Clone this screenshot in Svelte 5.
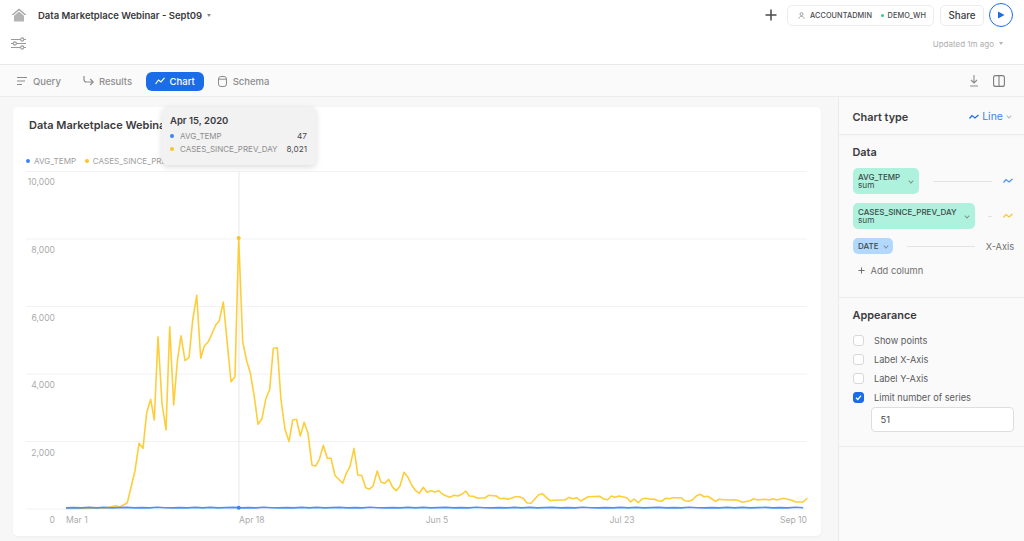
<script>
  const yellow = [[66,508.5],[81,508.4],[96,508.3],[108,507.6],[115.7,505.7],[120,507],[127.3,502.7],[135,470.7],[139,443.3],[143,448.3],[146.7,412.7],[150.7,399.3],[154.3,420],[158,336.7],[162,403.3],[166,430],[169.7,326.7],[173.7,405],[177.3,361.7],[181,335.7],[185,360.7],[189,357.7],[192.7,320],[196.7,295.3],[200.7,358.3],[204.3,346],[208.3,341.7],[211.7,334.3],[215.7,325],[219.3,320.7],[223.3,302],[227.3,343.3],[231,381.7],[235,376.7],[238.7,238],[242.7,341.7],[246.7,361],[250.3,372.7],[254.3,396.7],[258,424.3],[262,418.7],[265.7,399.3],[269.7,389.3],[273.3,348.3],[277.3,347.7],[281,400],[285,429.3],[289,441.5],[292.7,420],[296.5,419.3],[300.3,436],[304.2,422.3],[308,433.3],[312,465.2],[315.6,466],[319.3,459.6],[323.3,445.2],[327.3,458.3],[331,458.3],[335,475.5],[342.7,483.3],[346.3,473.3],[350,466.3],[354,448.3],[357.8,475],[361.7,475.5],[365.7,487.7],[369.3,489.2],[373,486.2],[377.2,471],[381,482.3],[385,483.3],[388.7,479.3],[392.7,487.3],[396.3,490.7],[400,486],[404,472.3],[408,477.3],[411.7,485],[415.7,490.7],[419.3,493.3],[423.3,487.3],[427,492.3],[431,490.7],[434.7,492],[438.7,490.7],[442.3,494],[446.3,496],[450,497.3],[454,495.3],[458,496],[461.7,494.3],[465.7,491],[469.3,496],[473.3,496.3],[477,498],[484.7,498],[488.7,495.3],[496.3,496],[500,498.7],[504,498.3],[508,499.3],[515.3,496.7],[519.3,496.7],[523.3,498.3],[527,503],[531,503.3],[538.7,494.7],[542.3,493.7],[550,500.7],[554,500.3],[560,500],[565,500],[569,497.3],[572.7,498.7],[576.7,497.7],[580.7,501],[588.3,496.7],[600,496.3],[603.7,499],[607.7,499.7],[611.3,496],[615,497.3],[619,496],[626.7,497.7],[630.7,502],[634,499],[638.3,502.7],[642.3,498.7],[646,498.3],[650,499.3],[654,499],[657.7,500.7],[661.7,501.3],[665.3,498.3],[669.3,498.7],[673.3,497.7],[680.7,497.7],[684.7,500.7],[688.7,501.3],[692.3,500],[696.3,496],[700,494.3],[704,496.7],[707.7,496.3],[711.7,498.7],[715.3,501.3],[719.3,499.3],[726.7,500],[735,499.7],[738.5,500.5],[742.3,502.3],[750,500.7],[753.7,498.7],[757.7,500],[765.3,499.3],[769,500],[773,498.7],[776.7,500],[783.3,498.3],[791,500],[796,502],[803.3,502],[807.3,498]];
  const blueOffsets = [0.4,0,0.5,-0.3,0.3,-0.4,0.4,0,-0.2,0.5,0,0.3,-0.5,0.2];
  const blue = [];
  for (let i = 0, x = 66; x <= 807; x += 7.6, i++) {
    blue.push([Math.round(x * 10) / 10, 507.6 + blueOffsets[i % blueOffsets.length] * 0.7]);
  }
  const toPts = (a) => a.map((p) => p.join(',')).join(' ');
  const grid = [171.5, 239, 306.5, 374, 441.5, 509];
  const yLabels = [['10,000', 185], ['8,000', 252.5], ['6,000', 320.5], ['4,000', 388], ['2,000', 455.5], ['0', 522.5]];
  const xLabels = [['Mar 1', 66, 'start'], ['Apr 18', 239, 'start'], ['Jun 5', 437, 'middle'], ['Jul 23', 622, 'middle'], ['Sep 10', 807, 'end']];
</script>

<div class="page">
  <header class="top">
    <div class="row one">
      <svg class="home" viewBox="0 0 16 14" width="16" height="14"><path d="M8 .5 15.5 7H13.6L8 2.3 2.4 7H.5Z" fill="#a2a2a2"/><path d="M8 3.6 13 7.8V13.5H3V7.8Z" fill="#b4b4b4"/></svg>
      <span class="title">Data Marketplace Webinar - Sept09</span>
      <span class="caret dark"></span>
      <span class="spacer"></span>
      <svg class="plus" viewBox="0 0 12 12" width="12" height="12"><path d="M6 .5v11M.5 6h11" stroke="#4a4a4d" stroke-width="1.5"/></svg>
      <div class="pill">
        <svg viewBox="0 0 8 8" width="7" height="7"><circle cx="4" cy="2.4" r="1.7" fill="none" stroke="#8a8a8a" stroke-width=".9"/><path d="M1 7.6C1.3 5.8 2.5 5 4 5s2.7.8 3 2.6" fill="none" stroke="#8a8a8a" stroke-width=".9"/></svg>
        <span class="role">ACCOUNTADMIN</span>
        <i class="green"></i>
        <span class="wh">DEMO_WH</span>
      </div>
      <button class="share">Share</button>
      <div class="play"><svg viewBox="0 0 8 8" width="8" height="8"><path d="M1 .5 7.5 4 1 7.5Z" fill="#1a6ce7"/></svg></div>
    </div>
    <div class="row two">
      <svg viewBox="0 0 15 13" width="15" height="13" fill="none" stroke="#9a9a9a" stroke-width="1.1"><path d="M0 2.5h9.5M13 2.5h2M0 6.5h2M5.5 6.5H15M0 10.5h9.5M13 10.5h2"/><circle cx="11.2" cy="2.5" r="1.6"/><circle cx="3.8" cy="6.5" r="1.6"/><circle cx="11.2" cy="10.5" r="1.6"/></svg>
      <span class="spacer"></span>
      <span class="updated">Updated 1m ago</span>
      <span class="caret light"></span>
    </div>
  </header>

  <nav class="tabs">
    <div class="tab query">
      <svg viewBox="0 0 10 10" width="10" height="10" stroke="#8c8c8c" stroke-width="1.2"><path d="M0 1.5h10M0 5h8M0 8.5h5"/></svg>
      <span>Query</span>
    </div>
    <div class="tab results">
      <svg viewBox="0 0 11 10" width="11" height="10" fill="none" stroke="#8c8c8c" stroke-width="1.2"><path d="M1 0v3.5C1 5 1.8 6 3.5 6H10M7.2 3l3 3-3 3"/></svg>
      <span>Results</span>
    </div>
    <div class="tab chart">
      <svg viewBox="0 0 10 8" width="10" height="8" fill="none" stroke="#fff" stroke-width="1.2"><path d="M.5 7 3.5 3 6 5 9.5.8"/></svg>
      <span>Chart</span>
    </div>
    <div class="tab schema">
      <svg viewBox="0 0 9 11" width="9" height="11" fill="none" stroke="#8c8c8c" stroke-width="1"><rect x=".5" y=".5" width="8" height="10" rx="2.5"/><path d="M.5 3.2h8"/></svg>
      <span>Schema</span>
    </div>
    <span class="spacer"></span>
    <svg class="dl" viewBox="0 0 10 12" width="10" height="12" fill="none" stroke="#8c8c8c" stroke-width="1.1"><path d="M5 0v7.5M2 5l3 3 3-3M1 11h8"/></svg>
    <svg class="split" viewBox="0 0 12 12" width="12" height="12" fill="none" stroke="#7c7c7c" stroke-width="1.1"><rect x=".6" y=".6" width="10.8" height="10.8" rx="2"/><path d="M6 .6v10.8"/></svg>
  </nav>

  <div class="body">
    <main class="main">
      <section class="card">
        <h2>Data Marketplace Webinar - Sept09</h2>
        <div class="legend">
          <i class="dot b"></i><span>AVG_TEMP</span>
          <i class="dot y"></i><span>CASES_SINCE_PREV_DAY</span>
        </div>
        <svg class="plot" viewBox="13 165 808 371" width="808" height="371">
          {#each grid as g}
            <line x1="26" x2="807" y1={g} y2={g} stroke="#f2f2f2" stroke-width="1" />
          {/each}
          <line x1="239" x2="239" y1="171.5" y2="509" stroke="#ececec" stroke-width="1.2" />
          {#each yLabels as [t, y]}
            <text x="55" y={y} text-anchor="end" class="ax">{t}</text>
          {/each}
          {#each xLabels as [t, x, a]}
            <text x={x} y="523" text-anchor={a} class="ax">{t}</text>
          {/each}
          <polyline points={toPts(yellow)} fill="none" stroke="#fdce3a" stroke-width="1.6" stroke-linejoin="round" />
          <polyline points={toPts(blue)} fill="none" stroke="#4d8ff5" stroke-width="1.7" stroke-linejoin="round" />
          <circle cx="238.7" cy="238" r="2" fill="#f9c428" />
          <circle cx="238.7" cy="507.8" r="2" fill="#3d84f2" />
        </svg>
        <div class="tip">
          <div class="tip-date">Apr 15, 2020</div>
          <div class="tip-row"><i class="dot b"></i><span class="tip-name">AVG_TEMP</span><span class="tip-val">47</span></div>
          <div class="tip-row"><i class="dot y"></i><span class="tip-name">CASES_SINCE_PREV_DAY</span><span class="tip-val">8,021</span></div>
        </div>
      </section>
    </main>

    <aside class="side">
      <div class="sec head">
        <span class="h">Chart type</span>
        <span class="spacer"></span>
        <svg viewBox="0 0 10 6" width="10" height="6" fill="none" stroke="#1a6ce7" stroke-width="1.2"><path d="M.5 4.5 3 1.5 6 4 9.5 1"/></svg>
        <span class="line-t">Line</span>
        <span class="chev blue"></span>
      </div>
      <div class="sec data">
        <div class="h">Data</div>
        <div class="drow first">
          <div class="chip mint w1"><div class="c-t"><b>AVG_TEMP</b><small>sum</small></div><span class="chev"></span></div>
          <span class="rule"></span>
          <svg class="sq" viewBox="0 0 10 6" width="10" height="6" fill="none" stroke="#4d8ff5" stroke-width="1.2"><path d="M.5 4.5 3 1.5 6 4 9.5 1"/></svg>
        </div>
        <div class="drow second">
          <div class="chip mint w2"><div class="c-t"><b>CASES_SINCE_PREV_DAY</b><small>sum</small></div><span class="chev"></span></div>
          <span class="rule"></span>
          <svg class="sq" viewBox="0 0 10 6" width="10" height="6" fill="none" stroke="#fbc52d" stroke-width="1.2"><path d="M.5 4.5 3 1.5 6 4 9.500 1"/></svg>
        </div>
        <div class="drow third">
          <div class="chip sky"><b>DATE</b><span class="chev"></span></div>
          <span class="rule"></span>
          <span class="xaxis">X-Axis</span>
        </div>
        <div class="add">
          <svg viewBox="0 0 8 8" width="7" height="7"><path d="M4 .5v7M.5 4h7" stroke="#6b6b6b" stroke-width="1.1"/></svg>
          <span>Add column</span>
        </div>
      </div>
      <div class="sec appear">
        <div class="h">Appearance</div>
        <label class="chk"><i class="box"></i><span>Show points</span></label>
        <label class="chk"><i class="box"></i><span>Label X-Axis</span></label>
        <label class="chk"><i class="box"></i><span>Label Y-Axis</span></label>
        <label class="chk"><i class="box on"><svg viewBox="0 0 10 10" width="9" height="9"><path d="M2.2 5.2 4.2 7.2 7.8 3" fill="none" stroke="#fff" stroke-width="1.4"/></svg></i><span>Limit number of series</span></label>
        <div class="num">51</div>
      </div>
    </aside>
  </div>
</div>

<style>
  :global(body) { margin: 0; background: #fff; }
  .page {
    width: 1024px; height: 541px; overflow: hidden; display: flex; flex-direction: column;
    font-family: Inter, "Liberation Sans", sans-serif; color: #3c3c40;
  }
  .spacer { flex: 1; }
  .top { height: 64px; border-bottom: 1px solid #e8e8e8; background: #fff; flex: none; }
  .row { display: flex; align-items: center; }
  .one { height: 22px; padding: 4px 11px 0 11px; }
  .two { padding: 11px 21px 0 11px; }
  .title { margin-left: 11px; font-size: 9.5px; font-weight: 600; color: #3a3a3e; }
  .caret { width: 0; height: 0; border-left: 2.5px solid transparent; border-right: 2.5px solid transparent; margin-left: 5px; }
  .caret.dark { border-top: 3px solid #8a8a8a; }
  .caret.light { border-top: 3px solid #b5b5b5; margin-left: 5px; }
  .plus { margin-right: 10px; }
  .pill {
    display: flex; align-items: center; width: 147px; height: 21px; box-sizing: border-box;
    border: 1px solid #ececec; border-radius: 5px; padding-left: 10px; font-size: 7.3px; font-weight: 500; color: #4a4a4e;
  }
  .role { margin-left: 5px; letter-spacing: .1px; }
  .green { width: 3px; height: 3px; border-radius: 50%; background: #23d18b; margin-left: 9px; }
  .wh { margin-left: 3.5px; letter-spacing: .1px; }
  .share {
    margin-left: 6px; width: 44px; height: 21px; background: #fff; border: 1px solid #ececec; border-radius: 5px;
    font: 500 9.8px Inter, sans-serif; color: #3c3c40; padding: 0;
  }
  .play {
    margin-left: 5px; width: 24px; height: 24px; box-sizing: border-box; border: 1.5px solid #1a6ce7; border-radius: 50%;
    display: flex; align-items: center; justify-content: center;
  }
  .updated { font-size: 8px; color: #aeaeae; }
  .tabs {
    height: 32px; box-sizing: border-box; flex: none; display: flex; align-items: center; background: #fafafa;
    border-bottom: 1px solid #ececec; padding: 1px 19px 0 17px; font-size: 9.5px; font-weight: 500; color: #8e8e8e;
  }
  .tab { display: flex; align-items: center; gap: 6px; }
  .results { margin-left: 22px; gap: 5px; }
  .chart {
    margin-left: 13.5px; width: 58px; height: 19px; box-sizing: border-box; justify-content: center; gap: 5px;
    background: #1a6ce7; color: #fff; border-radius: 6px;
  }
  .schema { margin-left: 14px; gap: 6px; }
  .dl { margin-right: 14px; }
  .body { flex: 1; display: flex; min-height: 0; }
  .main { flex: 1; background: #f7f7f7; padding: 10px 17px 0 13px; min-width: 0; }
  .card {
    position: relative; width: 808px; height: 429px; background: #fff; border-radius: 5px;
    box-shadow: 0 1px 3px rgba(0,0,0,.04);
  }
  h2 { margin: 0; padding: 11px 0 0 16px; font-size: 11px; line-height: 14px; font-weight: 600; color: #3a3a3e; white-space: nowrap; }
  .legend { display: flex; align-items: center; padding: 25px 0 0 13px; height: 8px; font-size: 8.1px; color: #a0a0a0; white-space: nowrap; box-sizing: content-box; }
  .legend span { margin-left: 4px; margin-right: 8.5px; }
  .dot { display: inline-block; width: 4px; height: 4px; border-radius: 50%; flex: none; }
  .dot.b { background: #3d84f2; }
  .dot.y { background: #f9c428; }
  .plot { display: block; position: absolute; left: 0; top: 58px; }
  .ax { font-size: 8.6px; fill: #ababab; font-family: Inter, sans-serif; }
  .tip {
    position: absolute; left: 149px; top: 0; width: 154px; height: 58px; box-sizing: border-box;
    padding: 7px 9px 0 8px; background: #f2f2f2; border-radius: 5px; box-shadow: 0 2px 6px rgba(0,0,0,.14);
  }
  .tip-date { font-size: 9.5px; font-weight: 600; line-height: 13px; color: #3a3a3e; margin-bottom: 2px; }
  .tip-row { display: flex; align-items: center; height: 13.5px; font-size: 8px; }
  .tip-name { margin-left: 6px; color: #8e8e8e; }
  .tip-val { margin-left: auto; font-weight: 400; color: #4a4a4e; font-size: 8.2px; }
  .side { width: 186px; flex: none; box-sizing: border-box; background: #fafafa; border-left: 1px solid #ececec; }
  .sec { padding: 0 10px 0 13.5px; border-bottom: 1px solid #ececec; }
  .h { font-size: 10.9px; font-weight: 600; color: #3a3a3e; line-height: 14px; }
  .head { height: 38px; display: flex; align-items: center; box-sizing: border-box; padding-top: 2px; box-shadow: 0 1px 2px rgba(0,0,0,.03); }
  .line-t { color: #1a6ce7; font-size: 10.5px; margin-left: 3px; opacity: .85; }
  .chev { width: 3px; height: 3px; box-sizing: content-box; border-right: 1px solid #7c8a86; border-bottom: 1px solid #7c8a86; transform: rotate(45deg) scale(.9); flex: none; }
  .chev.blue { border-color: #b0b0b0; margin-left: 4px; margin-right: 3px; margin-top: -2px; }
  .data { height: 163px; box-sizing: border-box; padding-top: 10px; }
  .drow { display: flex; align-items: center; }
  .first { margin-top: 9px; }
  .second { margin-top: 9px; }
  .third { margin-top: 9px; }
  .chip { display: flex; align-items: center; box-sizing: border-box; border-radius: 5px; padding-left: 5.5px; color: #3c4a48; flex: none; }
  .chip b { font-weight: 500; font-size: 8px; line-height: 8.5px; display: block; }
  .chip small { font-size: 8.2px; line-height: 8.5px; display: block; }
  .mint { background: #aef1dc; height: 26px; justify-content: space-between; padding-right: 6px; }
  .w1 { width: 66px; }
  .w2 { width: 122px; }
  .sky { background: #b3d8fe; height: 16px; width: 40px; gap: 5px; }
  .rule { flex: 1; height: 1px; background: #e3e3e3; margin: 0 11px 0 14px; }
  .second .rule { margin: 0 11px 0 13px; }
  .sq { margin-right: 1px; }
  .xaxis { font-size: 9.2px; color: #707070; }
  .add { display: flex; align-items: center; gap: 6px; margin: 11px 0 0 5px; font-size: 9.3px; color: #6f6f6f; }
  .appear { height: 149px; box-sizing: border-box; padding-top: 10px; }
  .appear .h { margin-bottom: 9px; }
  .chk { display: flex; align-items: center; height: 19px; font-size: 9.2px; color: #5a5a5e; }
  .chk span { margin-left: 10.5px; }
  .box { width: 11px; height: 11px; box-sizing: border-box; border: 1px solid #d8d8d8; border-radius: 3px; background: #fff; display: flex; align-items: center; justify-content: center; }
  .box.on { background: #1a6ce7; border-color: #1a6ce7; }
  .num {
    margin: 0 0 0 18px; height: 25px; width: 143px; box-sizing: border-box; border: 1px solid #dedede; border-radius: 4px;
    background: #fff; font-size: 9.4px; color: #4a4a4e; padding-left: 9px; line-height: 23px;
  }
</style>
